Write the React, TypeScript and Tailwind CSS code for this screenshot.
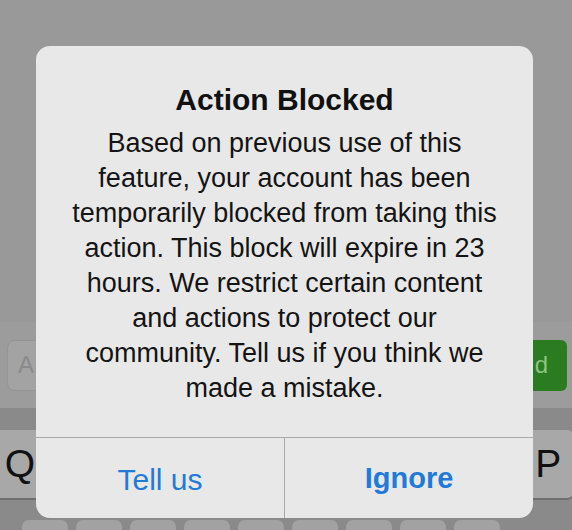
const bodyLines = [
  "Based on previous use of this",
  "feature, your account has been",
  "temporarily blocked from taking this",
  "action. This block will expire in 23",
  "hours. We restrict certain content",
  "and actions to protect our",
  "community. Tell us if you think we",
  "made a mistake.",
]

// only the outer keys peek out from behind the alert
const topRow = ["Q", "", "", "", "", "", "", "", "", "P"]
const midRow = [1, 2, 3, 4, 5, 6, 7, 8, 9]

export default function App() {
  return (
    <div className="relative w-[572px] h-[530px] overflow-hidden bg-[#999999] font-['Liberation_Sans',Arial,sans-serif]">
      <div className="h-[322px]" />

      {/* comment bar behind the alert */}
      <div className="h-[86px] bg-[#9c9c9c] flex items-center gap-[10px] pl-[7px] pr-[5px]">
        <div className="flex-1 h-[51px] rounded-[8px] bg-[#a3a3a3] border border-[#959595] flex items-center pl-[10px] text-[24px] text-[#8a8a8a]">
          A
        </div>
        <div className="w-[97px] h-[51px] rounded-[6px] bg-[#2b7b20] flex items-center justify-end pr-[19px] text-[24px] text-[#8cc482]">
          d
        </div>
      </div>

      {/* keyboard */}
      <div className="h-[122px] bg-[#8a8a8a] pt-[22px] flex flex-col gap-[22px]">
        <div className="flex gap-[6.7px] ml-[-6px]">
          {topRow.map((k, i) => (
            <div
              key={i}
              className="w-[52px] h-[68px] shrink-0 rounded-[7px] bg-[#a8a8a8] shadow-[0_2px_0_#6f6f6f] flex items-center justify-center text-[39px] text-[#111]"
            >
              {k}
            </div>
          ))}
        </div>
        <div className="flex gap-[8px] ml-[22px]">
          {midRow.map((k) => (
            <div key={k} className="w-[46px] h-[68px] shrink-0 rounded-[7px] bg-[#a2a2a2]" />
          ))}
        </div>
      </div>

      {/* alert */}
      <div className="absolute left-[36px] top-[46px] w-[497px] h-[472px] rounded-[14px] bg-[#e8e8e8] flex flex-col">
        <div className="h-[391px] pt-[36px] text-center">
          <div className="text-[30px] leading-[36px] font-bold text-[#111]">Action Blocked</div>
          <div className="mt-[8px] text-[27px] leading-[35px] text-[#141414]">
            {bodyLines.map((l) => (
              <div key={l}>{l}</div>
            ))}
          </div>
        </div>
        <div className="flex-1 flex border-t border-[#a9a9a9]">
          <div className="w-[249px] flex items-center justify-center pt-[2px] text-[30px] text-[#1f7ad9] border-r border-[#a9a9a9]">
            Tell us
          </div>
          <div className="flex-1 flex items-center justify-center pt-[2px] text-[29px] font-bold text-[#1f7ad9]">
            Ignore
          </div>
        </div>
      </div>
    </div>
  )
}
